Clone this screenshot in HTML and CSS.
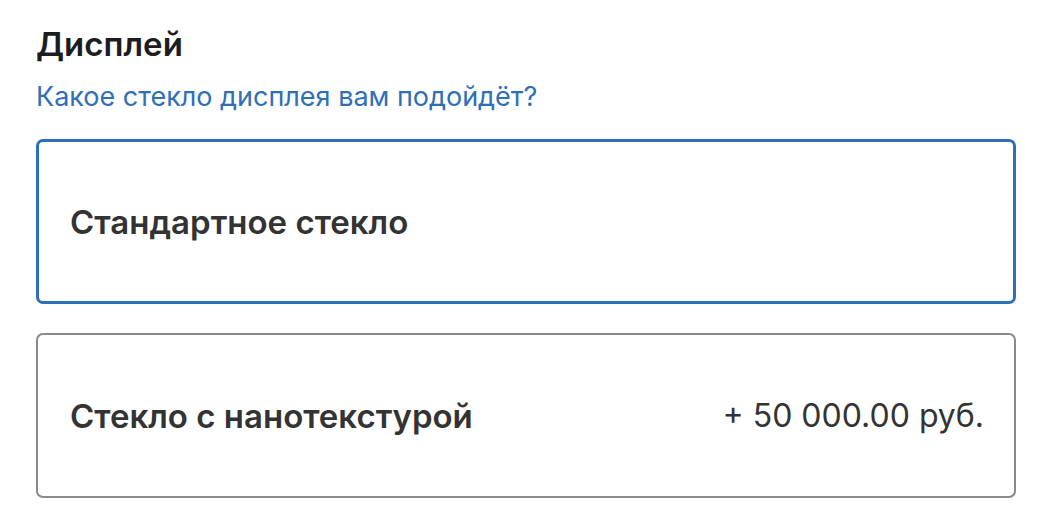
FILE: index.html
```html
<!DOCTYPE html>
<html lang="ru">
  <head>
    <meta charset="UTF-8" />
    <meta name="viewport" content="width=device-width, initial-scale=1.0" />
    <title>Дисплей</title>
    <link rel="stylesheet" href="styles.css">
  </head>
  <body>
    <div id="container">
      <h2 class="section-title">Дисплей</h2>
      <a class="help-link" href="#">Какое стекло дисплея вам подойдёт?</a>
      <div class="options">
        <div class="option selected">
          <span class="option-name">Стандартное стекло</span>
        </div>
        <div class="option">
          <span class="option-name">Стекло с нанотекстурой</span>
          <span class="option-price">+ 50 000.00 руб.</span>
        </div>
      </div>
    </div>
  </body>
</html>
```

FILE: styles.css
```css
body {
  font-family: Inter, "Liberation Sans", Arial, sans-serif;
  margin: 0;
  background-color: #fff;
}

#container {
  padding: 24px 40px 0 36px;
}

.section-title {
  margin: 0;
  font-size: 33px;
  line-height: 40px;
  font-weight: 600;
  color: #1d1d1f;
}

.help-link {
  display: block;
  margin-top: 16px;
  font-size: 27px;
  line-height: 34px;
  color: #2e6fb7;
  text-decoration: none;
}

.options {
  display: flex;
  flex-direction: column;
  gap: 29px;
  margin-top: 25px;
}

.option {
  display: flex;
  justify-content: space-between;
  align-items: center;
  height: 165px;
  box-sizing: border-box;
  padding: 0 30px 0 32px;
  border: 2px solid #8a8a8a;
  border-radius: 7px;
  color: #333;
  font-size: 32px;
}

.option.selected {
  border: 3px solid #2e6fb7;
  padding-left: 31px;
}

.option-name {
  font-size: 33px;
  font-weight: 600;
}
```
